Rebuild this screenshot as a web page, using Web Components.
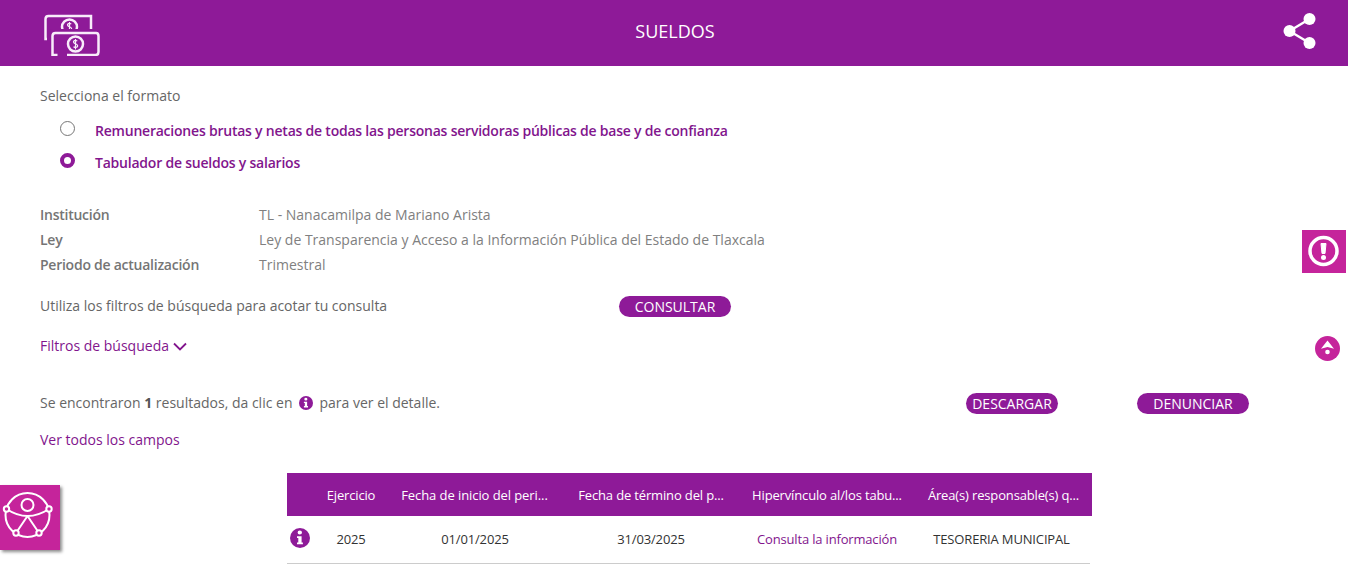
<!DOCTYPE html>
<html lang="es"><head><meta charset="utf-8"><title>Sueldos</title>
<style>
html,body{margin:0;padding:0;background:#fff;overflow:hidden;height:571px}
body{font:14px/20px "Open Sans",sans-serif;color:#666;position:relative}
</style></head><body>
<app-header></app-header>
<main-panel></main-panel>
<float-widgets></float-widgets>
<script>
const PURPLE='#8e1a98';
const TEXTP='#82158d';
const INFO=`<svg viewBox="0 0 20 20" width="100%" height="100%" style="display:block"><circle cx="10" cy="10" r="10" fill="${PURPLE}"/><path d="M7.6 4.6a2.2 2 0 1 0 4.4 0a2.2 2 0 1 0-4.4 0zM7 8.2h4.6v6.2h1.3v1.9H7v-1.9h1.3v-4.3H7z" fill="#fff"/></svg>`;
function def(name,html){customElements.define(name,class extends HTMLElement{constructor(){super();this.attachShadow({mode:'open'}).innerHTML=html}})}

def('app-header',`<style>
:host{display:grid;grid-template-columns:1fr auto 1fr;align-items:center;height:66px;background:${PURPLE};color:#fff;padding:0 31px 0 43px;box-sizing:border-box}
h1{font:400 18px/24px "Open Sans",sans-serif;margin:0 0 4px;text-align:center;padding-right:10px}
svg{display:block}
.s{justify-self:end;margin-bottom:5px}
</style>
<svg width="58" height="46" viewBox="0 0 58 46" fill="none" stroke="#f8ecfa" stroke-width="2.500">
<path d="M4 29H2.500V9q0-3 3-3H48v15"/>
<circle cx="26.500" cy="17" r="7.500"/>
<path d="M28.300 14q-2.300-1.200-3.600.1q-.8 1.600 1.800 2.700q2.900 1.300 1.900 3q-1.500 1.200-3.900.1M26.500 12v10.500" stroke-width="1.200"/>
<rect x="7" y="19" width="50" height="27" rx="3" fill="${PURPLE}" stroke="none"/>
<path d="M14.500 45H9.500V26q0-3 3-3H53q2.500 0 2.500 3v16q0 3-3 3H24"/>
<circle cx="32.500" cy="34" r="7.500"/>
<path d="M34.300 31q-2.300-1.200-3.600.1q-.8 1.600 1.800 2.700q2.900 1.300 1.900 3q-1.500 1.200-3.900.1M32.500 29v10.500" stroke-width="1.200"/>
</svg>
<h1>SUELDOS</h1>
<svg class="s" width="34" height="38" viewBox="0 0 34 38"><g fill="#fff"><circle cx="26.500" cy="7" r="6"/><circle cx="6.500" cy="19" r="6"/><circle cx="26.500" cy="31" r="6"/></g><path d="M26.500 7L6.500 19L26.500 31" fill="none" stroke="#fff" stroke-width="2.400"/></svg>`);

def('radio-row',`<style>
:host{display:flex;align-items:center;height:32px;color:${TEXTP};font-weight:600;font-size:14px;letter-spacing:-.22px}
.r{width:15px;height:15px;border-radius:50%;box-sizing:border-box;border:1px solid #767676;margin:-5px 20px 0 60px;background:#fff;flex:none}
:host([checked]) .r{border:4.500px solid ${PURPLE}}
</style><span class="r"></span><slot></slot>`);

def('info-row',`<style>
:host{display:grid;grid-template-columns:219px 1fr;height:25px;line-height:25px;color:#808080}
b{font-weight:600;color:#757575;letter-spacing:-.25px}
</style><b><slot name="k"></slot></b><span><slot></slot></span>`);

def('pill-button',`<style>
:host{display:inline-block;background:${PURPLE};color:#fff;border-radius:11px;height:21px;line-height:21px;text-align:center;font-size:14px;box-sizing:border-box;margin-top:2px}
</style><slot></slot>`);

def('data-table',`<style>
:host{display:block;width:805px;margin-left:287px;color:#333;font-size:13px;letter-spacing:-.15px}
.g{display:grid;grid-template-columns:28px 72px 176px 176px 176px 177px;text-align:center;align-items:center}
.h{background:${PURPLE};color:#fff;height:43px}
.h span:nth-child(3){letter-spacing:-.08px;padding-right:1px}
.b{height:47px;width:803px;border-bottom:1px solid #ccc;box-sizing:content-box}
.b>span,.b>a{margin-bottom:2px}
.b a{color:${TEXTP};letter-spacing:-.17px}
.t{padding-right:4px}
.b>.i{width:20px;height:20px;margin:0 0 4px 3px}
</style>
<div class="g h"><span></span><span>Ejercicio</span><span>Fecha de inicio del peri...</span><span>Fecha de término del p...</span><span>Hipervínculo al/los tabu...</span><span>Área(s) responsable(s) q...</span></div>
<div class="g b"><span class="i">${INFO}</span><span>2025</span><span>01/01/2025</span><span>31/03/2025</span><a>Consulta la información</a><span class="t">TESORERIA MUNICIPAL</span></div>`);

def('main-panel',`<style>
:host{display:block;padding-top:20px}
.p{padding-left:40px}
.opts{margin-top:9px;margin-bottom:23px}
.u{display:grid;grid-template-columns:579px auto 1fr;align-items:center;height:20px;margin-top:17px}
.u pill-button{width:112px}
.f{color:${TEXTP};margin-top:22px;display:flex;align-items:center;gap:4px}
.s{display:grid;grid-template-columns:926px 92px 79px 112px;align-items:center;margin-top:35px;height:20px}
.s p{margin:0;display:flex;align-items:center;white-space:pre}
.s b{font-weight:700;color:#555}
.s i{width:14px;height:14px;margin:0 6px 0 7px;display:block}
.v{color:${TEXTP};margin-top:19px;margin-bottom:23px}
</style>
<div class="p">Selecciona el formato</div>
<div class="opts">
<radio-row>Remuneraciones brutas y netas de todas las personas servidoras públicas de base y de confianza</radio-row>
<radio-row checked>Tabulador de sueldos y salarios</radio-row>
</div>
<div class="p">
<info-row><span slot="k">Institución</span>TL - Nanacamilpa de Mariano Arista</info-row>
<info-row><span slot="k">Ley</span>Ley de Transparencia y Acceso a la Información Pública del Estado de Tlaxcala</info-row>
<info-row><span slot="k">Periodo de actualización</span>Trimestral</info-row>
<div class="u"><span>Utiliza los filtros de búsqueda para acotar tu consulta</span><pill-button>CONSULTAR</pill-button></div>
<div class="f"><span>Filtros de búsqueda</span><svg width="14" height="9" viewBox="0 0 14 9" fill="none" stroke="${TEXTP}" stroke-width="1.800"><path d="M1 1.500L7 7.500L13 1.500"/></svg></div>
<div class="s"><p>Se encontraron <b>1</b> resultados, da clic en<i>${INFO}</i>para ver el detalle.</p><pill-button>DESCARGAR</pill-button><span></span><pill-button>DENUNCIAR</pill-button></div>
<div class="v">Ver todos los campos</div>
</div>
<data-table></data-table>`);

def('float-widgets',`<style>
:host{display:block}
.a{position:absolute;background:#c5249b}
.alert{left:1302px;top:230px;width:44px;height:43px}
.top{left:1315px;top:336px;width:25px;height:25px;border-radius:50%}
.acc{left:0;top:485px;width:60px;height:65px;box-shadow:2px 2px 3px rgba(0,0,0,.45)}
svg{display:block}
</style>
<div class="a alert"><svg width="44" height="43" viewBox="0 0 44 43"><circle cx="21.500" cy="21" r="13.500" fill="none" stroke="#fff" stroke-width="3.500"/><path d="M19 13.500h5l-1 10h-3z" fill="#fff" stroke="#fff" stroke-linejoin="round"/><circle cx="21.500" cy="27.500" r="2.500" fill="#fff"/></svg></div>
<div class="a top"><svg width="25" height="25" viewBox="0 0 25 25" fill="#fff"><path d="M12.500 4.500L19 12.800L12.500 11L6 12.800z"/><circle cx="12.500" cy="16" r="2.300"/></svg></div>
<div class="a acc"><svg width="60" height="65" viewBox="0 0 60 65" fill="none" stroke="#fff" stroke-width="2"><circle cx="27.500" cy="20" r="6"/><circle cx="27.500" cy="30" r="22"/><path d="M6.500 24Q27.500 38 49 24"/><path d="M27.500 31L16 48M27.500 31L39 48"/><g fill="#c5249b"><circle cx="6.500" cy="24" r="2.700"/><circle cx="49" cy="24" r="2.700"/><circle cx="16" cy="48" r="2.700"/><circle cx="39" cy="48" r="2.700"/></g></svg></div>`);
</script>
</body></html>
